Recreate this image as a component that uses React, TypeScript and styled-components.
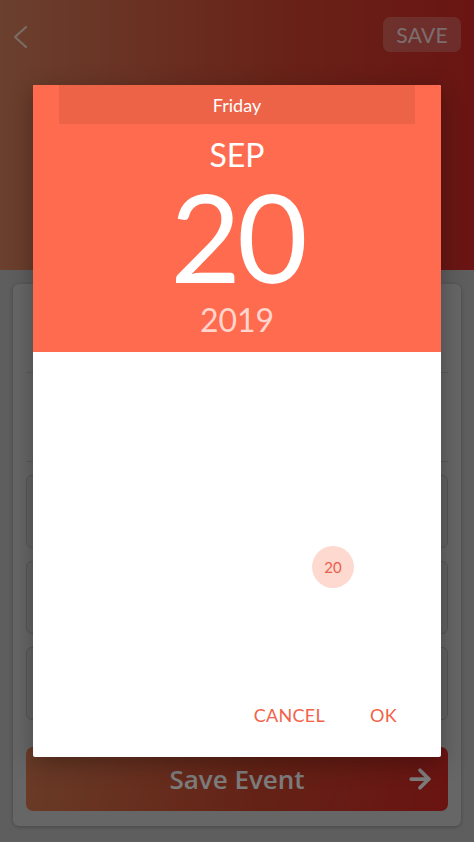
import * as React from 'react';
import styled, { createGlobalStyle } from 'styled-components';
import { ArrowRight } from 'lucide-react';

const CORAL = '#ff6b4e';

const GlobalStyle = createGlobalStyle`
	html, body {
		margin: 0;
		padding: 0;
	}
	body {
		background: #bdbdbd;
		font-family: 'Lato', 'Noto Sans', sans-serif;
	}
`

const Screen = styled.div`
	position: relative;
	width: 474px;
	height: 842px;
	display: flex;
	flex-direction: column;
	background: #bdbdbd;
	overflow: hidden;
`

const Header = styled.header`
	height: 270px;
	flex-shrink: 0;
	background: linear-gradient(90deg, #d6805c 0%, #d2452f 60%, #d42a26 100%);
`

const TopBar = styled.div`
	display: flex;
	justify-content: space-between;
	align-items: flex-start;
	padding: 17px 13px 0 12px;
`

const BackButton = styled.button`
	display: flex;
	margin-top: 8px;
	padding: 0;
	border: none;
	background: none;
	color: rgba(255, 255, 255, 0.7);
`

const SaveButton = styled.button`
	height: 35px;
	padding: 0 13px;
	border: none;
	border-radius: 7px;
	background: rgba(255, 255, 255, 0.22);
	color: rgba(255, 255, 255, 0.8);
	font-family: 'Lato', sans-serif;
	font-size: 21px;
	letter-spacing: 0.3px;
`

const Card = styled.main`
	flex: 1;
	margin: 14px 13px 16px;
	padding: 0 13px 15px;
	display: flex;
	flex-direction: column;
	background: #cccccc;
	border-radius: 6px;
	box-shadow: 0 1px 4px rgba(0, 0, 0, 0.25);
`

const FieldRow = styled.div`
	height: 89px;
	flex-shrink: 0;
	border-bottom: 1px solid #b4b4b4;
	box-sizing: border-box;
`

const InputBox = styled.div`
	height: 73px;
	margin-top: 13px;
	flex-shrink: 0;
	box-sizing: border-box;
	border: 1px solid #ababab;
	border-radius: 6px;
	background: #c6c6c6;
`

const SaveEventButton = styled.button`
	height: 64px;
	margin-top: 27px;
	padding: 0 13px;
	display: grid;
	grid-template-columns: 1fr auto 1fr;
	align-items: center;
	border: none;
	border-radius: 7px;
	background: linear-gradient(100deg, #d4774f 0%, #c8452c 55%, #d52824 100%);
	color: #fafafa;
	font-family: 'Open Sans', sans-serif;
	font-weight: 600;
	font-size: 26px;

	svg {
		justify-self: end;
	}
`

const Overlay = styled.div`
	position: absolute;
	inset: 0;
	display: flex;
	align-items: center;
	justify-content: center;
	background: rgba(0, 0, 0, 0.5);
`

const Dialog = styled.div`
	width: 408px;
	height: 672px;
	display: flex;
	flex-direction: column;
	background: #fff;
	border-radius: 2px;
	overflow: hidden;
	box-shadow: 0 6px 24px rgba(0, 0, 0, 0.3);
`

const DialogHeader = styled.div`
	height: 267px;
	flex-shrink: 0;
	display: flex;
	flex-direction: column;
	align-items: center;
	background: ${CORAL};
	color: #fff;
`

const DayBand = styled.div`
	align-self: stretch;
	height: 39px;
	margin: 0 26px;
	display: flex;
	align-items: center;
	justify-content: center;
	background: rgba(0, 0, 0, 0.07);
	font-size: 18px;
`

const MonthLabel = styled.div`
	margin-top: 13px;
	font-size: 32px;
	line-height: 36px;
`

const DayNumber = styled.div`
	margin-top: 15px;
	font-size: 122px;
	line-height: 96px;
	letter-spacing: -4px;
`

const YearLabel = styled.div`
	margin-top: 18px;
	font-size: 32px;
	line-height: 36px;
	color: rgba(255, 255, 255, 0.72);
`

const DialogBody = styled.div`
	flex: 1;
	display: flex;
	flex-direction: column;
`

const MonthGrid = styled.div`
	padding: 95px 36px 0;
	display: grid;
	grid-template-columns: repeat(7, 48px);
	grid-auto-rows: 48px;
`

const DayCell = styled.div`
	display: flex;
	align-items: center;
	justify-content: center;
`

const SelectedDay = styled.span`
	width: 42px;
	height: 42px;
	display: flex;
	align-items: center;
	justify-content: center;
	border-radius: 50%;
	background: #fdd9d0;
	color: #e9604a;
	font-size: 15px;
`

const Actions = styled.div`
	margin-top: auto;
	padding: 0 28px 23px;
	display: flex;
	justify-content: flex-end;
	gap: 13px;
`

const TextButton = styled.button`
	padding: 8px 16px;
	border: none;
	background: none;
	color: #f2624a;
	font-family: 'Lato', sans-serif;
	font-size: 18px;
	line-height: 22px;
	letter-spacing: 0.3px;
`

// September 2019 starts on a Sunday
const FIRST_WEEKDAY = 0;
const DAYS_IN_MONTH = 30;
const SELECTED = 20;

const App = () => {
	const cells: (number | null)[] = [];
	for (let i = 0; i < FIRST_WEEKDAY; i++) cells.push(null);
	for (let d = 1; d <= DAYS_IN_MONTH; d++) cells.push(d);

	return (
		<Screen>
			<GlobalStyle />
			<Header>
				<TopBar>
					<BackButton>
						<svg width="18" height="24" viewBox="0 0 18 24" fill="none" stroke="currentColor" strokeWidth="2.2" strokeLinecap="round" strokeLinejoin="round">
							<path d="M14 2 L3 12 L14 22" />
						</svg>
					</BackButton>
					<SaveButton>SAVE</SaveButton>
				</TopBar>
			</Header>
			<Card>
				<FieldRow />
				<FieldRow />
				<InputBox />
				<InputBox />
				<InputBox />
				<SaveEventButton>
					<span />
					<span>Save Event</span>
					<ArrowRight size={30} strokeWidth={3} />
				</SaveEventButton>
			</Card>

			<Overlay>
				<Dialog>
					<DialogHeader>
						<DayBand>Friday</DayBand>
						<MonthLabel>SEP</MonthLabel>
						<DayNumber>20</DayNumber>
						<YearLabel>2019</YearLabel>
					</DialogHeader>
					<DialogBody>
						<MonthGrid>
							{cells.map((d, i) => (
								<DayCell key={i}>
									{d === SELECTED && <SelectedDay>{d}</SelectedDay>}
								</DayCell>
							))}
						</MonthGrid>
						<Actions>
							<TextButton>CANCEL</TextButton>
							<TextButton>OK</TextButton>
						</Actions>
					</DialogBody>
				</Dialog>
			</Overlay>
		</Screen>
	)
}

export default App;
